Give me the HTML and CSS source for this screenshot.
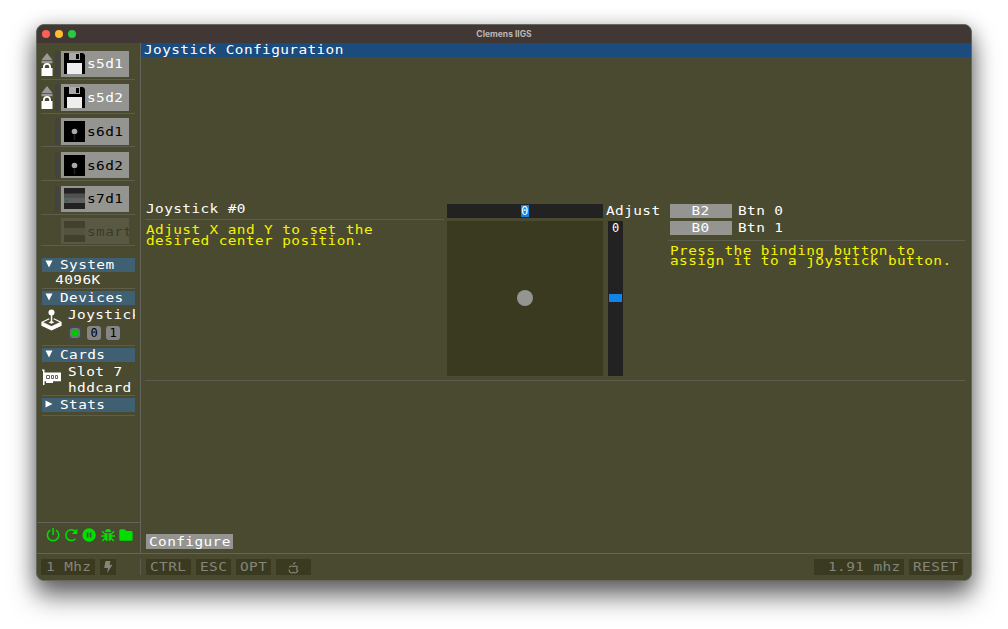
FILE: index.html
```html
<!DOCTYPE html>
<html lang="en">
<head>
<meta charset="utf-8">
<title>Clemens IIGS</title>
<link rel="stylesheet" href="styles.css">
</head>
<body>
<div class="window">
  <header class="titlebar">
    <div class="lights"><i class="red"></i><i class="amber"></i><i class="green"></i></div>
    <span>Clemens IIGS</span>
  </header>
  <div class="body">
    <aside class="sidebar">
      <div class="drives">
        <div class="drive">
          <svg class="lock" viewBox="0 0 11 24"><path fill="#999" d="M5.500 1 11 8H0zM0 8.800h11v2.400H0z"/><path fill="#fff" fill-rule="evenodd" d="M1.500 16v-1a4 4 0 0 1 8 0v1h1.500v8H0v-8zM3.300 16h4.400v-1a2.200 2.200 0 0 0-4.400 0z"/></svg>
          <i class="bar"></i>
          <div class="disk"><svg viewBox="0 0 21 21"><path d="M0 0h19l2 2v19H0z"/><path fill="#aaa" d="M5 0h11v7H5z"/><path d="M12 1h3v5h-3z"/><path fill="#eee" d="M3 10h15v11H3z"/></svg><b class="t light">s5d1</b></div>
        </div>
        <div class="drive">
          <svg class="lock" viewBox="0 0 11 24"><path fill="#999" d="M5.500 1 11 8H0zM0 8.800h11v2.400H0z"/><path fill="#fff" fill-rule="evenodd" d="M1.500 16v-1a4 4 0 0 1 8 0v1h1.500v8H0v-8zM3.300 16h4.400v-1a2.200 2.200 0 0 0-4.400 0z"/></svg>
          <i class="bar"></i>
          <div class="disk"><svg viewBox="0 0 21 21"><path d="M0 0h19l2 2v19H0z"/><path fill="#aaa" d="M5 0h11v7H5z"/><path d="M12 1h3v5h-3z"/><path fill="#eee" d="M3 10h15v11H3z"/></svg><b class="t light">s5d2</b></div>
        </div>
        <div class="drive">
          <i class="bar"></i>
          <div class="disk"><svg viewBox="0 0 21 21"><path d="M0 0h21v21H0z"/><circle cx="10.500" cy="10.500" r="2.800" fill="#aaa"/><path fill="#222" d="M9.700 14h1.600v5H9.700z"/></svg><b class="t">s6d1</b></div>
        </div>
        <div class="drive">
          <i class="bar"></i>
          <div class="disk"><svg viewBox="0 0 21 21"><path d="M0 0h21v21H0z"/><circle cx="10.500" cy="10.500" r="2.800" fill="#aaa"/><path fill="#222" d="M9.700 14h1.600v5H9.700z"/></svg><b class="t">s6d2</b></div>
        </div>
        <div class="drive">
          <i class="bar"></i>
          <div class="disk"><svg viewBox="0 0 21 21"><path fill="#222" d="M0 0h21v21H0z"/><path fill="#505050" d="M0 5.500h21V10H0z"/><path fill="#606060" d="M0 10h21v5H0z"/><path fill="#16696b" d="M2 11.500h2v2H2z"/></svg><b class="t">s7d1</b></div>
        </div>
        <div class="drive last">
          <i class="bar"></i>
          <div class="disk"><svg viewBox="0 0 21 21"><path fill="#222" d="M0 0h21v7H0zM0 14h21v7H0z"/><path fill="#777" d="M0 7h21v7H0z"/></svg><b class="t">smart</b></div>
        </div>
      </div>
      <section class="group system">
        <h2><svg viewBox="0 0 8 8"><path d="M.5.500h7L4 7.500z"/></svg><span class="t">System</span></h2>
        <p class="t memory">4096K</p>
      </section>
      <section class="group devices">
        <h2><svg viewBox="0 0 8 8"><path d="M.5.500h7L4 7.500z"/></svg><span class="t">Devices</span></h2>
        <div class="entry">
          <svg class="joy" viewBox="0 0 22 22"><circle cx="10.500" cy="3.500" r="3" fill="#fff"/><path fill="#fff" d="M9.800 5h1.500v9H9.800z"/><path fill="none" stroke="#fff" stroke-width="1.200" stroke-linejoin="round" d="M8.300 9.800 1 13.300l9.500 4.500L20 13.300l-7.300-3.500"/><path fill="#fff" d="M.4 13.300 10.500 18l10.100-4.700v3.400L10.500 21.400.4 16.700zM7.500 13.300l3-1.400 3 1.400-3 1.500z"/></svg>
          <div class="lines">
            <span class="t">Joystick</span>
            <div class="btns"><i class="led"></i><i class="t">0</i><i class="t">1</i></div>
          </div>
        </div>
      </section>
      <section class="group cards">
        <h2><svg viewBox="0 0 8 8"><path d="M.5.500h7L4 7.500z"/></svg><span class="t">Cards</span></h2>
        <div class="entry">
          <svg class="card" viewBox="0 0 20 17"><path fill="#fff" d="M0 .5h2.500v3H19v8.800H2.500V16H1V1.800H0zM4 12h7v2H4z"/><path fill="none" stroke="#66664f" d="M4.500 6.500h3v3h-3zM9.500 6.500h2v3h-2zM13.500 6.500h2v3h-2z"/></svg>
          <div class="lines"><span class="t">Slot 7</span><span class="t">hddcard</span></div>
        </div>
      </section>
      <section class="group stats">
        <h2><svg viewBox="0 0 8 8"><path d="M.5.500v7l7-3.500z"/></svg><span class="t">Stats</span></h2>
      </section>
      <nav class="tools">
        <svg viewBox="0 0 14 14"><path class="line" d="M4.200 2.200a5.700 5.700 0 1 0 5.600 0M7 0v7"/></svg>
        <svg viewBox="0 0 14 14"><path class="line" d="M11.300 10.800a5.400 5.400 0 1 1 0-7.200"/><path d="M13.300.5V6H7.800z"/></svg>
        <svg viewBox="0 0 14 14"><path fill-rule="evenodd" d="M7 .3a6.700 6.700 0 1 0 0 13.400A6.700 6.700 0 0 0 7 .3M4.700 4.500h1.600v5H4.700zm3 0h1.600v5H7.700z"/></svg>
        <svg viewBox="0 0 14 14"><path d="M4 4a3 3 0 0 1 6 0zM3.300 5h3.200v8C4.500 13 3.300 11.500 3.300 9.500zM7.500 5h3.200v4.500c0 2-1.200 3.500-3.200 3.500z"/><path class="line" d="M3.500 5.700 1 3.200M10.500 5.700 13 3.200M0 8h4M10 8h4M3.800 10.500 1.200 13M10.200 10.500l2.600 2.500"/></svg>
        <svg viewBox="0 0 14 14"><path d="M1.500 1.200h4l1.800 1.700H12a1.500 1.500 0 0 1 1.500 1.500v6.800A1.500 1.500 0 0 1 12 12.700H1.700a1.500 1.500 0 0 1-1.500-1.500V2.700a1.500 1.500 0 0 1 1.300-1.500"/></svg>
      </nav>
    </aside>
    <main class="main">
      <h1><span class="t">Joystick Configuration</span></h1>
      <div class="config">
        <div class="intro">
          <p class="t name">Joystick #0</p>
          <p class="t hint">Adjust X and Y to set the
desired center position.</p>
        </div>
        <div class="stick">
          <div class="xslider"><span class="t">0</span></div>
          <div class="pad"><i></i></div>
        </div>
        <div class="adjust">
          <span class="t">Adjust</span>
          <div class="yslider"><span class="t">0</span><i></i></div>
        </div>
        <div class="bindings">
          <div class="bind"><button><span class="t mid">B2</span></button><span class="t">Btn 0</span></div>
          <div class="bind"><button><span class="t mid">B0</span></button><span class="t">Btn 1</span></div>
          <p class="t hint">Press the binding button to
assign it to a joystick button.</p>
        </div>
      </div>
      <button class="configure"><span class="t">Configure</span></button>
    </main>
  </div>
  <footer class="status">
    <div class="speed">
      <span class="key mhz"><b class="t">1 Mhz</b></span>
      <span class="key bolt"><svg viewBox="0 0 10 12"><path d="M2.500 0h5L6.500 3.800h3L4.200 12 5 7H1.200z"/></svg></span>
    </div>
    <div class="keys">
      <span class="key ctrl"><b class="t">CTRL</b></span>
      <span class="key esc"><b class="t">ESC</b></span>
      <span class="key opt"><b class="t">OPT</b></span>
      <span class="key apple"><svg viewBox="0 0 11 12"><path d="M9.500 5.200C8.500 3.800 7 3.800 5.500 4.500 3.500 3.500 1.800 4.200 1.500 5.500M1 7.500C1.200 9.500 2.500 11 4 11l1.500-.5L7 11c1.300 0 2.300-1 2.800-2.200C8.500 8.200 8.300 6.500 9.500 5.200M5.500 2.800C5.500 1.500 6.300.8 7.500.7"/></svg></span>
    </div>
    <span class="key rate"><b class="t">1.91 mhz</b></span>
    <span class="key reset"><b class="t">RESET</b></span>
  </footer>
</div>
</body>
</html>
```
FILE: styles.css
```css
* { box-sizing: border-box; }
body { margin: 0; height: 629px; overflow: hidden; background: #fff; padding: 24px 36px; }
h1, h2, p { margin: 0; font-weight: normal; }
i, b { font-style: normal; font-weight: normal; }
svg { display: block; flex: none; }
button { border: 0; padding: 0; background: #949491; color: #fff; }

.window {
  width: 936px; height: 557px; overflow: hidden;
  display: flex; flex-direction: column;
  border: 1px solid #66675f; border-radius: 8px;
  background: #4a4a30; color: #fff;
  box-shadow: 0 16px 26px rgba(0,0,0,.5), 0 4px 20px rgba(0,0,0,.32);
}
/* Wide, squarish terminal lettering */
.t {
  display: block; flex: none;
  font: 12px/14px "DejaVu Sans Mono", monospace;
  letter-spacing: .343px; white-space: pre;
  transform: scaleX(1.2); transform-origin: 0 50%;
}
.t.mid { transform-origin: 50% 50%; }

.titlebar {
  height: 18px; flex: none; display: grid; grid-template-columns: 1fr auto 1fr; align-items: center;
  background: #413735; color: #bdb6b4;
  font: bold 8.500px/18px Inter, sans-serif;
}
.lights { display: flex; gap: 5px; padding-left: 4.500px; }
.lights i { width: 8px; height: 8px; border-radius: 50%; }
.red { background: #ff5f57; }
.amber { background: #febc2e; }
.green { background: #28c840; }

.body { display: flex; height: 511px; border-bottom: 1px solid #63645c; }
.sidebar { width: 104px; flex: none; border-right: 1px solid #63645c; display: flex; flex-direction: column; overflow: hidden; }
.drives { padding: 3px 5px 0 4px; }
.drive { height: 33.750px; padding: 4.500px 0 0; border-bottom: 1px solid #5d5d4e; display: flex; justify-content: flex-end; }
.lock { width: 12px; height: 24px; margin: 1px auto 0 0; }
.bar { width: 4px; height: 26.500px; margin-right: 2px; background: #424240; }
.disk { width: 68px; height: 26.500px; margin-right: 6px; padding: 3px 0 3px 2.500px; background: #949491; display: flex; align-items: center; gap: 2.500px; overflow: hidden; color: #000; }
.disk svg { width: 21px; height: 21px; }
.disk .t { position: relative; top: .5px; }
.disk .light { color: #fff; }
.drive.last { height: 31px; padding-top: 3px; }
.last .disk, .last .bar { opacity: .2; }

.group { margin: 0 5px; border-bottom: 1px solid #5d5d4e; }
.group h2 { height: 14px; background: #3f6072; display: flex; align-items: center; }
.group h2 svg { width: 8px; height: 8px; margin: -1px 7px 0 3px; fill: #fff; }
.system { margin-top: 12px; height: 31px; }
.memory { padding: 1px 0 0 11px; }
.devices { margin-top: 2px; height: 55px; }
.entry { display: flex; }
.joy { width: 22px; height: 22px; margin: 4px 5px 0 -1px; }
.devices .lines { padding-top: 3px; width: 67px; overflow: hidden; }
.btns { display: flex; gap: 5px; padding-top: 4px; }
.btns i { width: 14px; height: 14px; border-radius: 3px; background: #858585; color: #000; transform: none; text-align: center; letter-spacing: 0; }
.btns .led { background: #49494c; padding: 3px; }
.led::before { content: ""; display: block; width: 8px; height: 8px; border-radius: 2px; background: radial-gradient(circle, #00c800 3.200px, #74747a 4px); box-shadow: 0 0 0 1px #74747a; }
.cards { margin-top: 2px; height: 48px; }
.card { width: 20px; height: 17px; margin: 7px 6px 0 0; }
.cards .lines { padding-top: 3px; display: grid; row-gap: 2px; }
.stats { margin-top: 2px; height: 18px; }
.tools { margin-top: auto; height: 31px; border-top: 1px solid #63645c; padding: 5px 0 0 9px; display: flex; gap: 4px; }
.tools svg { width: 14.200px; height: 14px; fill: #00df00; }
.tools .line { fill: none; stroke: #00df00; stroke-width: 1.500; }

.main { flex: 1; display: flex; flex-direction: column; overflow: hidden; }
.main h1 { height: 14px; background: #1c4b7e; padding-left: 3px; flex: none; }
.config { margin: 146px 6px 0 4px; height: 178px; display: flex; border-bottom: 1px solid #5d5d4e; }
.intro { width: 302px; background: linear-gradient(#5d5d4e, #5d5d4e) 0 16px / 299px 1px no-repeat; }
.name { height: 16px; line-height: 13px; margin-left: 1px; }
.hint { color: #f4f400; line-height: 10.500px; }
.intro .hint { margin-left: 1px; padding-top: 6px; }
.stick { width: 156px; }
.xslider { height: 14px; margin-top: 1px; background: #222; display: flex; justify-content: center; align-items: center; }
.xslider .t { width: 8px; height: 12px; line-height: 12px; background: #1184e8; transform: none; letter-spacing: 0; }
.pad { margin-top: 2.500px; height: 155.500px; background: #3a3a20; display: grid; place-items: center; }
.pad i { width: 16px; height: 16px; border-radius: 50%; background: #949491; }
.adjust { width: 65px; padding: 1px 0 0 3px; }
.yslider { margin: 3px 0 0 2px; width: 15px; height: 155px; background: #222; display: flex; flex-direction: column; align-items: center; }
.yslider .t { transform: none; letter-spacing: 0; }
.yslider i { width: 13px; height: 8px; margin-top: 59px; background: #1184e8; }
.bindings { flex: 1; padding: 1px 0 0 2px; background: linear-gradient(#5d5d4e, #5d5d4e) 0 37px / 100% 1px no-repeat; }
.bind { display: flex; gap: 6px; margin-bottom: 3px; }
.bind button { width: 62px; height: 14px; display: flex; justify-content: center; }
.bindings .hint { padding-top: 7.500px; }
.configure { width: 87px; height: 15px; margin: auto 0 4px 4.500px; padding-left: 3px; text-align: left; }

.status { flex: 1; display: flex; align-items: flex-start; padding: 5px 8px 0 4px; gap: 5px; }
.speed { width: 100px; display: flex; gap: 5px; border-right: 1px solid #5d5d4e; }
.keys { display: flex; gap: 5px; margin-right: auto; }
.key { height: 16px; padding: 1px 0 0 5px; background: #3a3a20; color: #85857a; }
.mhz { width: 54px; }
.bolt { width: 16px; padding: 2px 3px; }
.bolt svg { width: 10px; height: 12px; fill: #85857a; }
.ctrl { width: 45px; padding-left: 4px; }
.esc { width: 35px; padding-left: 4px; }
.opt { width: 35px; padding-left: 4px; }
.apple { width: 35px; padding: 3px 12px; }
.apple svg { width: 11px; height: 12px; fill: none; stroke: #85857a; stroke-width: 1.200; }
.rate { width: 90px; padding-left: 14px; }
.reset { width: 54px; padding-left: 4px; }
```
